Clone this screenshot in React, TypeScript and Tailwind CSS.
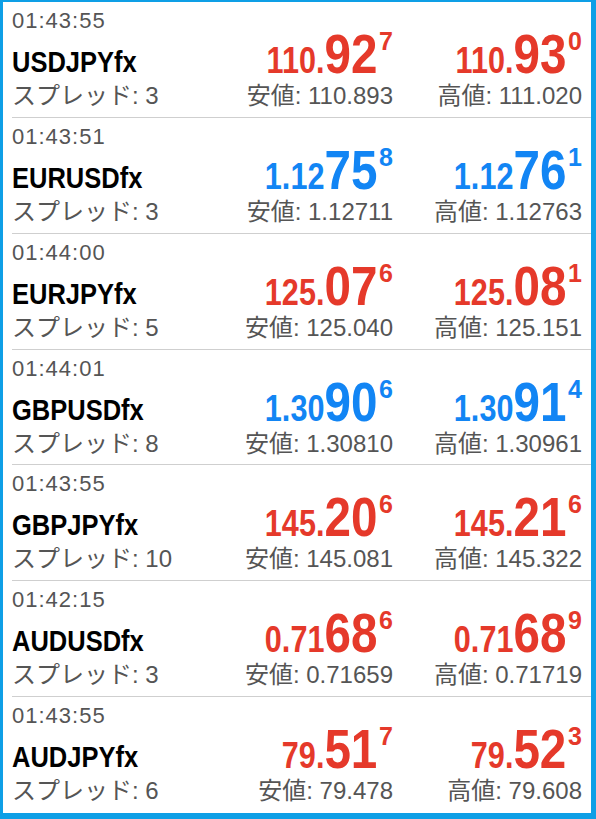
import React from "react";

type Row = {
  time: string;
  symbol: string;
  spread: string;
  color: "red" | "blue";
  bid: [string, string, string];
  ask: [string, string, string];
  low: string;
  high: string;
};

const rows: Row[] = [
  { time: "01:43:55", symbol: "USDJPYfx", spread: "3", color: "red", bid: ["110.", "92", "7"], ask: ["110.", "93", "0"], low: "110.893", high: "111.020" },
  { time: "01:43:51", symbol: "EURUSDfx", spread: "3", color: "blue", bid: ["1.12", "75", "8"], ask: ["1.12", "76", "1"], low: "1.12711", high: "1.12763" },
  { time: "01:44:00", symbol: "EURJPYfx", spread: "5", color: "red", bid: ["125.", "07", "6"], ask: ["125.", "08", "1"], low: "125.040", high: "125.151" },
  { time: "01:44:01", symbol: "GBPUSDfx", spread: "8", color: "blue", bid: ["1.30", "90", "6"], ask: ["1.30", "91", "4"], low: "1.30810", high: "1.30961" },
  { time: "01:43:55", symbol: "GBPJPYfx", spread: "10", color: "red", bid: ["145.", "20", "6"], ask: ["145.", "21", "6"], low: "145.081", high: "145.322" },
  { time: "01:42:15", symbol: "AUDUSDfx", spread: "3", color: "red", bid: ["0.71", "68", "6"], ask: ["0.71", "68", "9"], low: "0.71659", high: "0.71719" },
  { time: "01:43:55", symbol: "AUDJPYfx", spread: "6", color: "red", bid: ["79.", "51", "7"], ask: ["79.", "52", "3"], low: "79.478", high: "79.608" },
];

const regular = "font-['Liberation_Sans','Noto_Sans_CJK_JP',sans-serif]";
const bold = "font-['Liberation_Sans',sans-serif] font-bold";

function Price({ parts, color }: { parts: [string, string, string]; color: "red" | "blue" }) {
  return (
    <div
      className={`${bold} text-right text-[56px] leading-[50px] whitespace-nowrap ${
        color === "red" ? "text-[#e5392a]" : "text-[#1285f4]"
      }`}
    >
      <span className="inline-block origin-right scale-x-[0.85]">
        <span className="text-[36px] leading-none">{parts[0]}</span>
        <span>{parts[1]}</span>
      </span>
      <span className="text-[25px] leading-none align-[23px] ml-[2px]">{parts[2]}</span>
    </div>
  );
}

export default function App() {
  return (
    <div className="w-[596px] h-[819px] bg-white border-[#0e9fe6] border-t-[2px] border-l-[3px] border-r-[5px] border-b-[6px] flex flex-col">
      {rows.map((r, i) => (
        <div
          key={i}
          className={`ml-[9px] h-[116px] flex pr-[9px] ${
            i < rows.length - 1 ? "border-b border-[#cfcfcf]" : ""
          }`}
        >
          <div className="flex-1 flex flex-col pt-[6px]">
            <div className={`${regular} text-[22px] leading-[26px] tracking-[1px] text-[#555555]`}>{r.time}</div>
            <div className={`${bold} text-[30px] leading-[34px] mt-[11px] text-black`}>
              <span className="inline-block origin-left scale-x-[0.85]">{r.symbol}</span>
            </div>
            <div className={`${regular} text-[24px] leading-[28px] mt-[3px] text-[#555555] whitespace-nowrap`}>
              スプレッド: {r.spread}
            </div>
          </div>
          <div className="w-[170px] flex flex-col pt-[27px]">
            <Price parts={r.bid} color={r.color} />
            <div className={`${regular} text-right text-[24px] leading-[28px] mt-[3px] text-[#555555] whitespace-nowrap`}>
              安値: {r.low}
            </div>
          </div>
          <div className="w-[189px] flex flex-col pt-[27px]">
            <Price parts={r.ask} color={r.color} />
            <div className={`${regular} text-right text-[24px] leading-[28px] mt-[3px] text-[#555555] whitespace-nowrap`}>
              高値: {r.high}
            </div>
          </div>
        </div>
      ))}
    </div>
  );
}
